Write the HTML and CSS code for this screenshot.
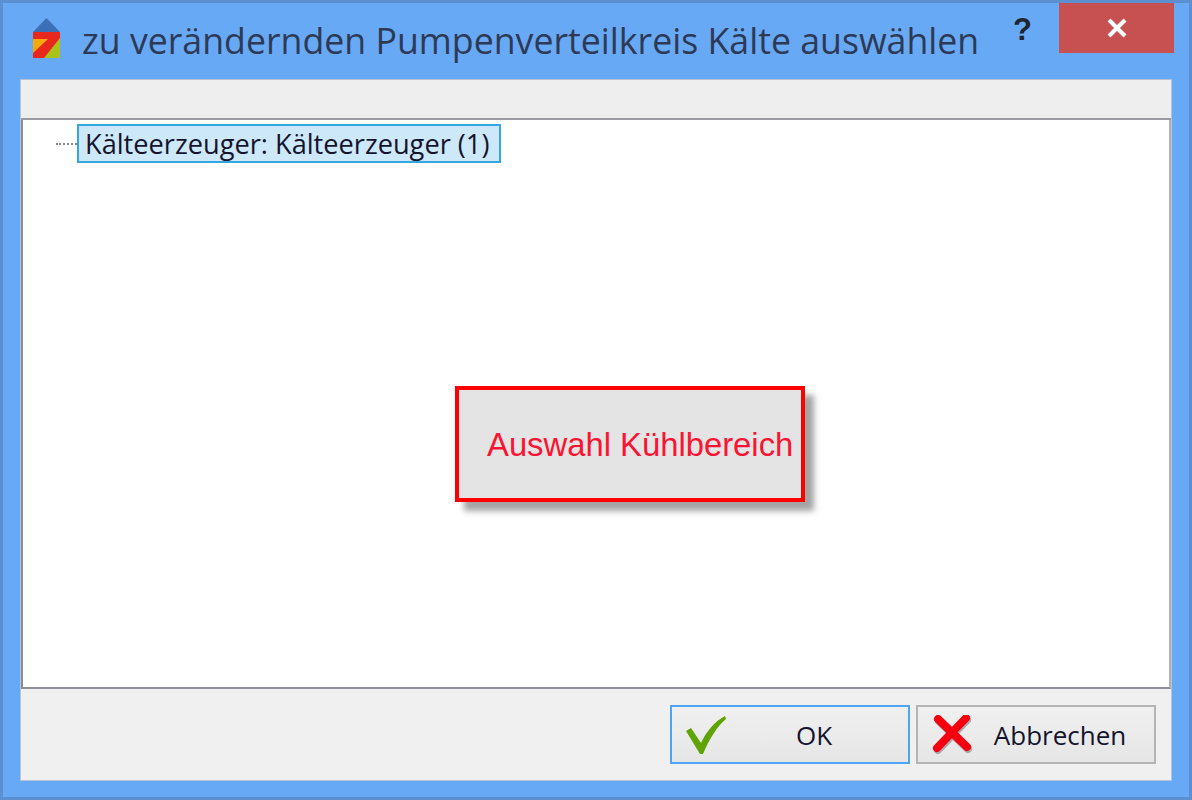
FILE: index.html
```html
<!DOCTYPE html>
<html lang="de">
<head>
    <meta charset="UTF-8">
    <title>zu verändernden Pumpenverteilkreis Kälte auswählen</title>
    <link rel="stylesheet" href="styles.css">
</head>
<body>
    <div class="window">
        <div class="title-bar">
            <svg class="app-icon" width="28" height="40" viewBox="0 0 28 40">
                <path d="M0 14 L13.500 0 L27 14 Z" fill="#3b6fb8"/>
                <rect x="0" y="14" width="27" height="26" fill="#f5a90f"/>
                <path d="M27 20 L27 40 L9 40 Z" fill="#a9c31c"/>
                <path d="M0 14 H27 V20 L11 40 H0 V35 L15 21 H0 Z" fill="#e8281e"/>
            </svg>
            <span class="title-text">zu verändernden Pumpenverteilkreis Kälte auswählen</span>
            <span class="help">?</span>
            <div class="close-button">
                <svg width="20" height="20" viewBox="0 0 20 20">
                    <path d="M2 2 L18 18 M18 2 L2 18" stroke="#fff" stroke-width="4"/>
                </svg>
            </div>
        </div>
        <div class="client">
            <div class="toolbar"></div>
            <div class="tree">
                <div class="tree-row">
                    <span class="tree-dots"></span>
                    <span class="tree-item">Kälteerzeuger: Kälteerzeuger (1)</span>
                </div>
                <div class="callout">Auswahl Kühlbereich</div>
            </div>
            <div class="button-bar">
                <button class="dialog-button ok-button">
                    <svg class="button-icon" width="42" height="48" viewBox="0 0 42 48">
                        <path d="M0 20 L5 17 L15 32 C20 21 29 10 39 5 L40 8 C31 15 23 29 17 43 L14 43 Z" fill="#5fa305"/>
                    </svg>
                    <span class="button-label">OK</span>
                </button>
                <button class="dialog-button">
                    <svg class="button-icon" width="42" height="40" viewBox="0 0 42 40">
                        <path d="M7 6 L36 34 M35 5 L6 35" stroke="#aaa" stroke-width="8" stroke-linecap="round"/>
                        <path d="M6 4 L35 32 M34 3 L5 33" stroke="#f60010" stroke-width="8" stroke-linecap="round"/>
                    </svg>
                    <span class="button-label">Abbrechen</span>
                </button>
            </div>
        </div>
    </div>
</body>
</html>
```

FILE: styles.css
```css
html, body {
    margin: 0;
    height: 100%;
}
body {
    font-family: "Open Sans", "Noto Sans", sans-serif;
    background-color: #68a9f6;
}
.window {
    box-sizing: border-box;
    width: 1192px;
    height: 800px;
    display: flex;
    flex-direction: column;
    background-color: #68a9f6;
    border: 3px solid #5b8fd0;
    padding: 0 17px 16px 17px;
}
.title-bar {
    display: flex;
    align-items: flex-start;
    height: 76px;
    flex-shrink: 0;
    position: relative;
}
.app-icon {
    margin: 15px 0 0 13px;
}
.title-text {
    margin: 13px 0 0 21px;
    font-size: 35.7px;
    line-height: 48px;
    color: #2e3a55;
    white-space: nowrap;
}
.help {
    position: absolute;
    left: 993px;
    top: 7px;
    font-family: "Liberation Sans", sans-serif;
    font-weight: bold;
    font-size: 31px;
    line-height: 40px;
    color: #1e2430;
}
.close-button {
    position: absolute;
    left: 1039px;
    top: 0;
    width: 115px;
    height: 50px;
    display: flex;
    align-items: center;
    justify-content: center;
    background-color: #c75050;
}
.client {
    flex: 1;
    min-height: 0;
    display: flex;
    flex-direction: column;
    background-color: #f0f0f0;
    border: 1px solid #b5c4d8;
}
.toolbar {
    height: 38px;
    flex-shrink: 0;
    background-color: #eeeeee;
    border-bottom: 2px solid #9a9aa0;
}
.tree {
    flex: 1;
    min-height: 0;
    position: relative;
    background-color: #fff;
    border-left: 2px solid #8a8d92;
    border-right: 2px solid #b0b0b0;
    border-bottom: 2px solid #8f9095;
    padding-top: 4px;
}
.tree-row {
    display: flex;
    align-items: center;
    padding-left: 33px;
}
.tree-dots {
    width: 21px;
    border-top: 2px dotted #888;
}
.tree-item {
    box-sizing: border-box;
    height: 39px;
    line-height: 36px;
    padding: 0 10px 0 6px;
    font-size: 27.2px;
    color: #14142e;
    background-color: #cde8f8;
    border: 2px solid #35a6e0;
    white-space: nowrap;
}
.callout {
    position: absolute;
    left: 432px;
    top: 266px;
    box-sizing: border-box;
    width: 350px;
    height: 116px;
    padding: 34px 0 0 28px;
    font-family: "Liberation Sans", sans-serif;
    font-size: 32.8px;
    line-height: 42px;
    color: #fa1432;
    background-color: #e4e4e4;
    border: 4px solid #ff0000;
    box-shadow: 9px 9px 6px rgba(90, 90, 90, 0.55);
    white-space: nowrap;
}
.button-bar {
    height: 91px;
    flex-shrink: 0;
    box-sizing: border-box;
    display: flex;
    justify-content: flex-end;
    align-items: flex-start;
    gap: 6px;
    padding: 16px 15px 0 0;
}
.dialog-button {
    box-sizing: border-box;
    width: 240px;
    height: 59px;
    display: flex;
    align-items: center;
    padding: 0;
    font-family: inherit;
    font-size: 26px;
    color: #14142e;
    background: linear-gradient(#f0f0f0, #e6e6e6);
    border: 2px solid #b4b4b4;
}
.ok-button {
    border-color: #4fa5f5;
}
.button-icon {
    margin-left: 14px;
    flex-shrink: 0;
}
.button-label {
    flex: 1;
    text-align: center;
    padding-right: 8px;
}
```
